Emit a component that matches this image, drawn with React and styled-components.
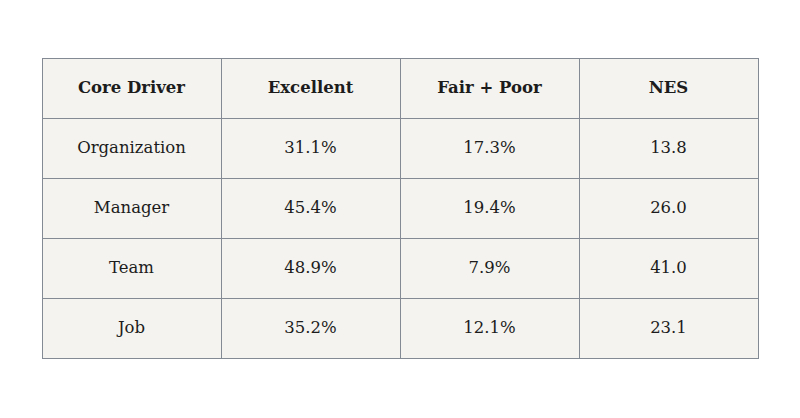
import React from 'react';
import styled, { createGlobalStyle } from 'styled-components';

const GlobalStyle = createGlobalStyle`
    html, body {
        margin: 0;
        padding: 0;
        background: #ffffff;
    }
`;

const rows = [
    { driver: 'Organization', excellent: '31.1%', fairPoor: '17.3%', nes: '13.8' },
    { driver: 'Manager', excellent: '45.4%', fairPoor: '19.4%', nes: '26.0' },
    { driver: 'Team', excellent: '48.9%', fairPoor: '7.9%', nes: '41.0' },
    { driver: 'Job', excellent: '35.2%', fairPoor: '12.1%', nes: '23.1' },
];

const App = () => {
    return (
        <>
            <GlobalStyle />
            <Page>
                <Table>
                    <thead>
                        <tr>
                            <Cell as="th" head>Core Driver</Cell>
                            <Cell as="th" head>Excellent</Cell>
                            <Cell as="th" head>Fair + Poor</Cell>
                            <Cell as="th" head>NES</Cell>
                        </tr>
                    </thead>
                    <tbody>
                        {rows.map(row => (
                            <tr key={row.driver}>
                                <Cell>{row.driver}</Cell>
                                <Cell>{row.excellent}</Cell>
                                <Cell>{row.fairPoor}</Cell>
                                <Cell>{row.nes}</Cell>
                            </tr>
                        ))}
                    </tbody>
                </Table>
            </Page>
        </>
    );
}

const Page = styled.div`
    width: 800px;
    height: 417px;
    display: flex;
    align-items: center;
    justify-content: center;
`;

const Table = styled.table`
    border-collapse: collapse;
    table-layout: fixed;
    width: 717px;
    font-family: "DejaVu Serif", "Liberation Serif", serif;
    color: #1c1c1c;
`;

const Cell = styled.td`
    width: 179px;
    height: 60px;
    padding: 0 0 3px;
    box-sizing: border-box;
    border: 1px solid #838a94;
    background: #f4f3ef;
    text-align: center;
    vertical-align: middle;
    font-size: 16.5px;
    font-weight: ${props => props.head ? '700' : '400'};
`;

export default App;
